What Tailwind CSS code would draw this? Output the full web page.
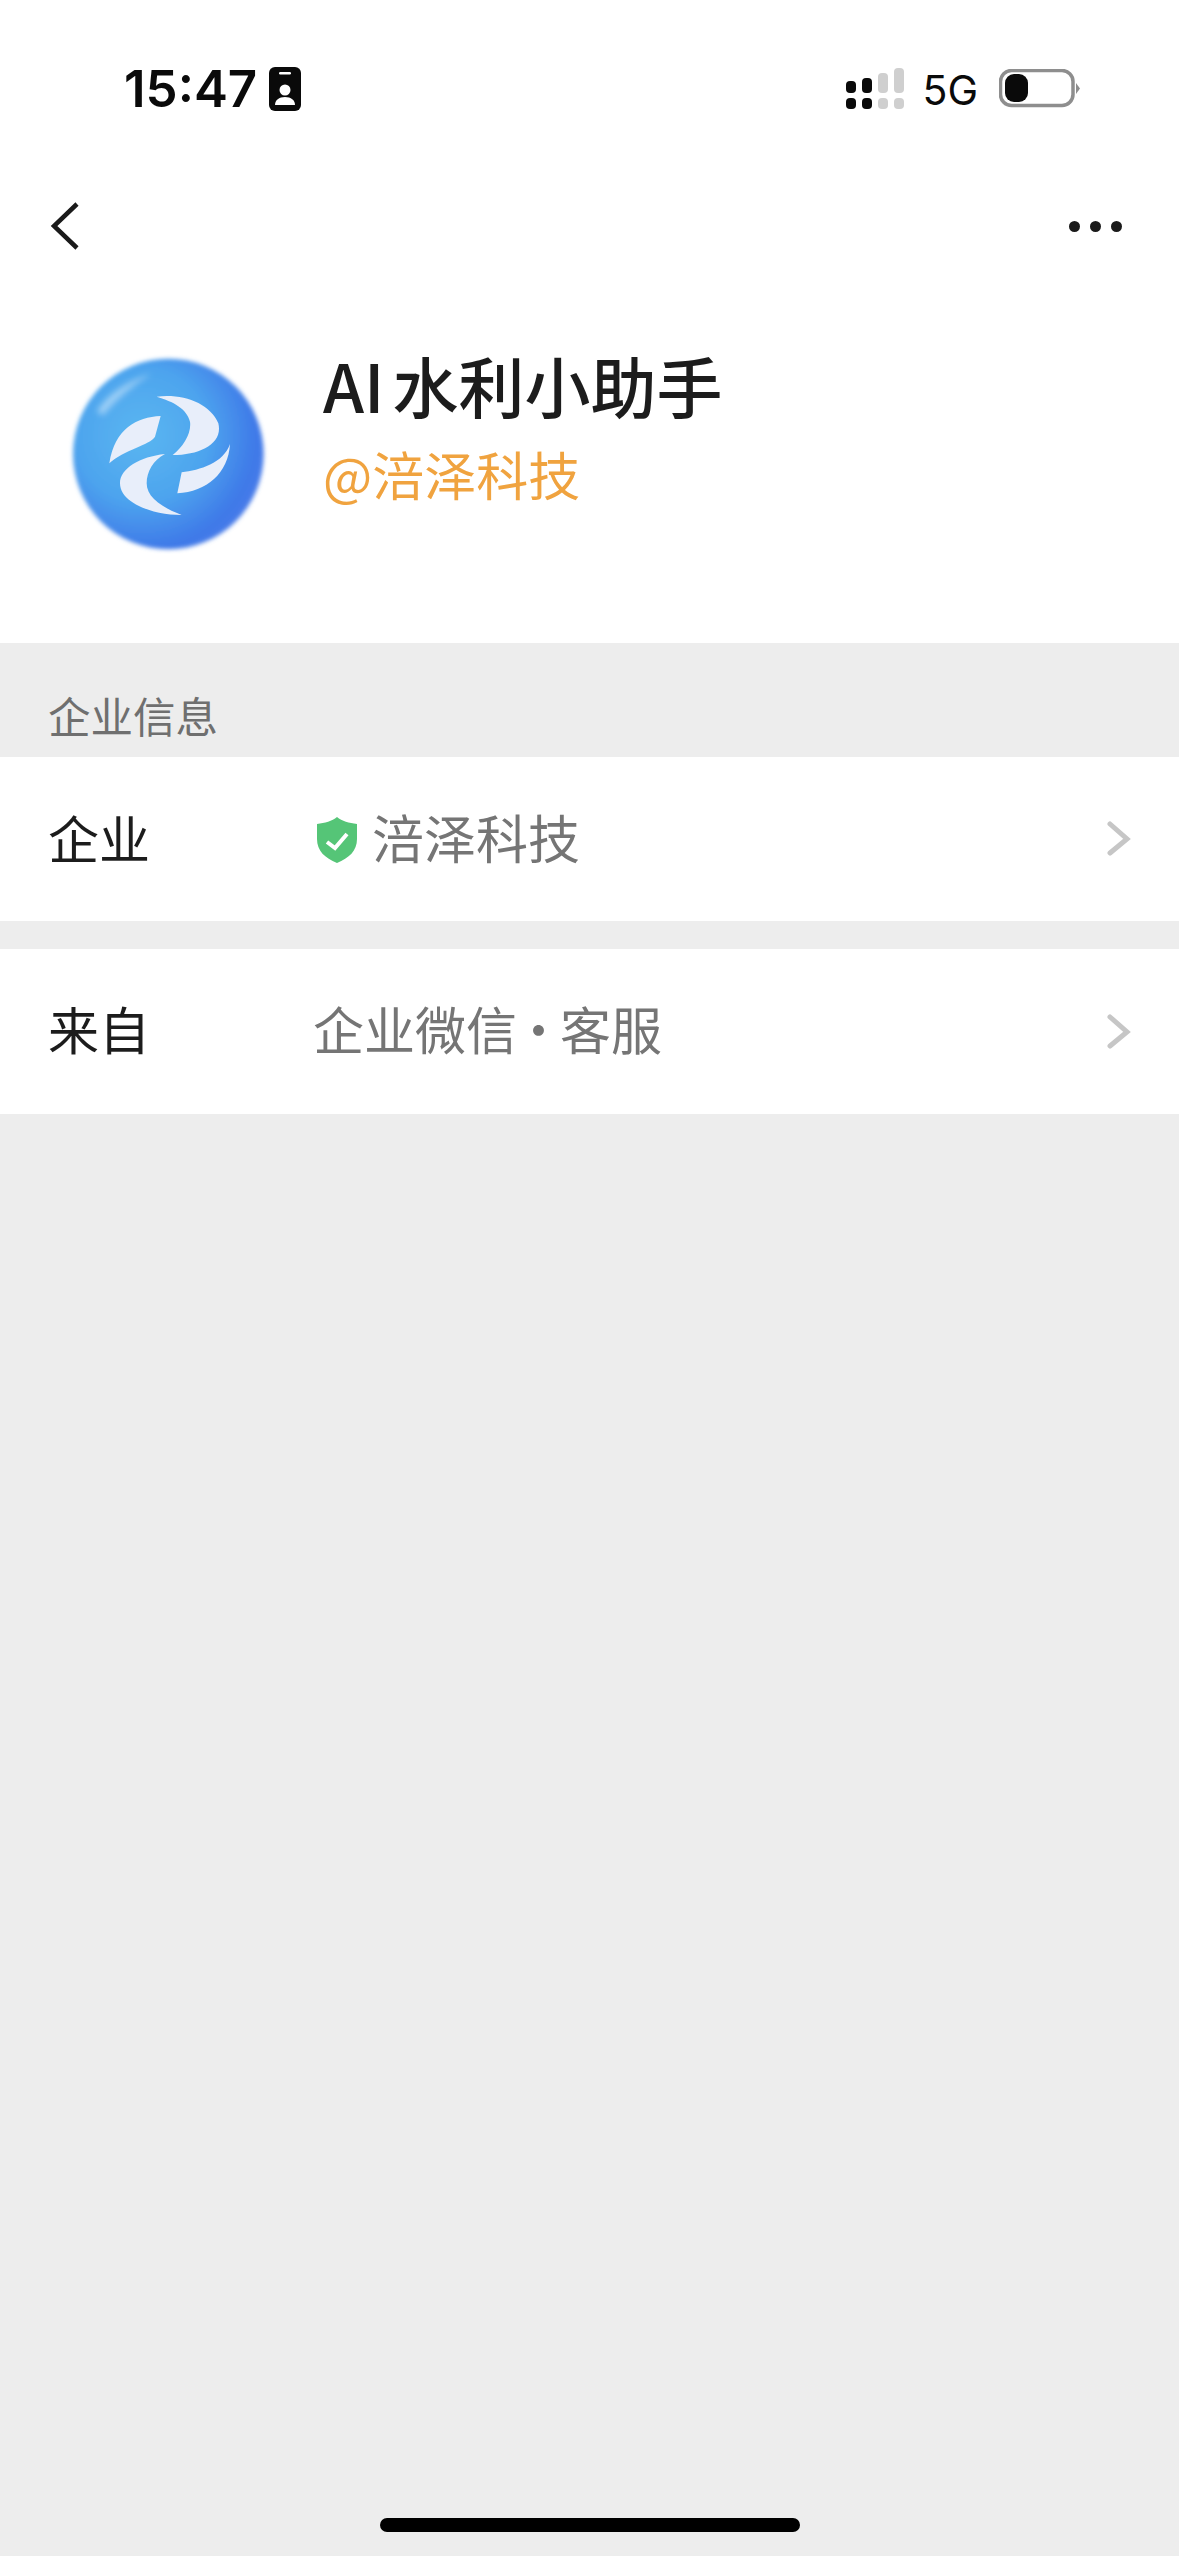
<!DOCTYPE html>
<html lang="zh-CN">
<head>
  <meta charset="UTF-8" />
  <meta name="viewport" content="width=device-width, initial-scale=1.0"/>
  <title>AI水利小助手</title>
  <script src="https://cdn.jsdelivr.net/npm/@tailwindcss/browser@4"></script>
</head>
<body class="m-0 bg-[#ededed]">
  <div class="relative flex h-[2556px] w-[1179px] flex-col overflow-hidden font-['Noto_Sans_CJK_SC','Noto_Sans',sans-serif]">

    <!-- status bar + nav + profile -->
    <div class="h-[643px] bg-white">
      <div class="flex h-[176px] items-start justify-between pl-[124px] pr-[98px] pt-[63px]">
        <div class="mt-[4px] flex items-center gap-[12px]">
          <span class="font-['Inter',sans-serif] text-[51px] leading-[44px] font-semibold text-[#0a0a0a]">15:47</span>
          <svg width="32" height="44" viewBox="0 0 32 44">
            <rect width="32" height="44" rx="6" fill="#0a0a0a"/>
            <rect x="10" y="5" width="12" height="2.5" rx="1.2" fill="#fff"/>
            <circle cx="16" cy="23" r="5.5" fill="#fff"/>
            <path d="M6 38c0-5 4-8 10-8s10 3 10 8z" fill="#fff"/>
          </svg>
        </div>
        <div class="flex items-center">
          <svg width="58" height="42" viewBox="0 0 58 42">
            <rect x="0" y="13" width="10" height="12" rx="4" fill="#0a0a0a"/>
            <rect x="0" y="30" width="10" height="11" rx="4" fill="#0a0a0a"/>
            <rect x="16" y="10" width="10" height="15" rx="4" fill="#0a0a0a"/>
            <rect x="16" y="30" width="10" height="11" rx="4" fill="#0a0a0a"/>
            <rect x="32" y="5" width="10" height="20" rx="4" fill="#cfcfcf"/>
            <rect x="32" y="30" width="10" height="11" rx="4" fill="#cfcfcf"/>
            <rect x="48" y="0" width="10" height="25" rx="4" fill="#cfcfcf"/>
            <rect x="48" y="30" width="10" height="11" rx="4" fill="#cfcfcf"/>
          </svg>
          <span class="ml-[18px] mt-[2px] font-['Inter',sans-serif] text-[41px] leading-[50px] font-normal text-[#0a0a0a]">5G</span>
          <svg class="ml-[21px]" width="82" height="40" viewBox="0 0 82 40">
            <rect x="1.500" y="1.500" width="72.500" height="35" rx="11" fill="#fff" stroke="#8e8e8e" stroke-width="3.500"/>
            <rect x="6" y="5" width="23" height="28" rx="9" fill="#0a0a0a"/>
            <path d="M77 14l4 5.500-4 5.500z" fill="#8e8e8e"/>
          </svg>
        </div>
      </div>

      <div class="flex h-[100px] items-center justify-between pl-[50px] pr-[57px]">
        <svg width="30" height="52" viewBox="0 0 30 52" fill="none">
          <path d="M27 4L4 26l23 22" stroke="#1a1a1a" stroke-width="4.500"/>
        </svg>
        <div class="flex gap-[10px]">
          <span class="h-[11px] w-[11px] rounded-full bg-[#1a1a1a]"></span>
          <span class="h-[11px] w-[11px] rounded-full bg-[#1a1a1a]"></span>
          <span class="h-[11px] w-[11px] rounded-full bg-[#1a1a1a]"></span>
        </div>
      </div>

      <div class="flex pl-[50px] pt-[64px]">
        <svg width="240" height="240" viewBox="0 0 720 720">
          <defs>
            <radialGradient id="ball" cx="36%" cy="40%" r="70%">
              <stop offset="0" stop-color="#5ab6f1"/>
              <stop offset="0.5" stop-color="#4da4ee"/>
              <stop offset="0.85" stop-color="#3f7ae8"/>
              <stop offset="1" stop-color="#4a7be9"/>
            </radialGradient>
            <filter id="soft1"><feGaussianBlur stdDeviation="6"/></filter>
            <filter id="soft2"><feGaussianBlur stdDeviation="2"/></filter>
            <filter id="soft3"><feGaussianBlur stdDeviation="9"/></filter>
          </defs>
          <circle cx="355" cy="342" r="286" fill="url(#ball)" filter="url(#soft1)"/>
          <path d="M140 215c35-55 90-90 165-115-55 35-105 75-145 125z" fill="#fff" fill-opacity="0.45" filter="url(#soft3)"/>
          <g fill="#e8eefa" filter="url(#soft2)">
            <path d="M320 170C400 160 480 190 505 250C520 310 450 345 368 345C400 320 425 280 420 245C410 205 370 185 320 170z"/>
            <path d="M332 228C260 232 195 265 178 370C220 330 300 315 315 290z"/>
            <path d="M345 342C270 350 210 385 210 430C210 490 310 525 395 525C330 500 290 470 290 430C290 395 310 360 345 342z"/>
            <path d="M540 312C520 370 450 390 395 397L382 460C470 455 535 400 540 312z"/>
          </g>
        </svg>
        <div class="ml-[33px] -mt-[2px] flex flex-col">
          <div class="text-[66px] leading-[92px] font-medium text-[#1c1c1c]">AI<span class="ml-[8px]">水利小助手</span></div>
          <div class="mt-[7px] text-[52px] leading-[74px] text-[#f0a33f]">@涪泽科技</div>
        </div>
      </div>
    </div>

    <!-- section label -->
    <div class="flex h-[114px] items-end pb-[12px] pl-[48px] text-[42.500px] leading-[60px] text-[#6f6f6f]">企业信息</div>

    <!-- rows -->
    <div class="flex h-[164px] items-center bg-white pl-[48px] pr-[48px]">
      <div class="mb-[4px] w-[269px] text-[51px] leading-[70px] text-[#1c1c1c]">企业</div>
      <svg class="mt-[2px]" width="40" height="46" viewBox="0 0 40 46">
        <path d="M20 0c5 4 12 6 20 7v15c0 12-8 19-20 24C8 41 0 34 0 22V7c8-1 15-3 20-7z" fill="#55c577"/>
        <path d="M10 25l8 6 12-14" fill="none" stroke="#fff" stroke-width="4"/>
      </svg>
      <div class="mb-[4px] ml-[15px] flex-1 text-[52px] leading-[70px] text-[#757575]">涪泽科技</div>
      <svg width="24" height="38" viewBox="0 0 24 38" fill="none">
        <path d="M3 4l17 15L3 33" stroke="#c6c6c6" stroke-width="5" stroke-linecap="round"/>
      </svg>
    </div>
    <div class="mt-[28px] flex h-[165px] items-center bg-white pl-[48px] pr-[48px]">
      <div class="mb-[8px] w-[265px] text-[51px] leading-[70px] text-[#1c1c1c]">来自</div>
      <div class="mb-[8px] flex-1 text-[51px] leading-[70px] text-[#757575]">企业微信<span class="mx-[-4px]">·</span>客服</div>
      <svg width="24" height="38" viewBox="0 0 24 38" fill="none">
        <path d="M3 4l17 15L3 33" stroke="#c6c6c6" stroke-width="5" stroke-linecap="round"/>
      </svg>
    </div>

    <!-- home indicator -->
    <div class="absolute bottom-[24px] left-[380px] h-[14px] w-[420px] rounded-full bg-black"></div>
  </div>
</body>
</html>
